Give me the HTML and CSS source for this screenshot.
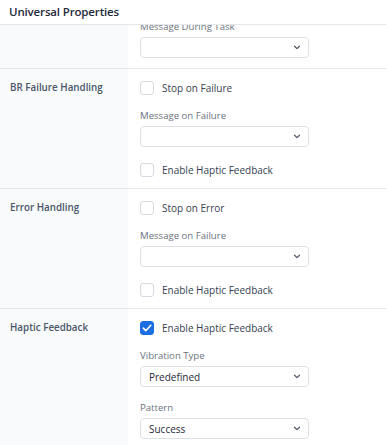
FILE: index.html
```html
<!DOCTYPE html>
<html lang="en">
<head>
    <meta charset="UTF-8">
    <meta name="viewport" content="width=device-width, initial-scale=1.0">
    <title>Universal Properties</title>
    <link rel="stylesheet" href="styles.css">
</head>
<body>
    <div class="panel">
        <div class="panel-header">Universal Properties</div>
        <div class="panel-body">
            <section class="row row-cut">
                <div class="row-label"></div>
                <div class="row-fields">
                    <div class="field-label first">Message During Task</div>
                    <div class="select"><span></span><svg width="8" height="5" viewBox="0 0 8 5"><path d="M1.5 1.2l2.5 2.4 2.5-2.4" /></svg></div>
                </div>
            </section>

            <section class="row">
                <div class="row-label">BR Failure Handling</div>
                <div class="row-fields">
                    <label class="check"><span class="box"></span>Stop on Failure</label>
                    <div class="field-label">Message on Failure</div>
                    <div class="select"><span></span><svg width="8" height="5" viewBox="0 0 8 5"><path d="M1.5 1.2l2.5 2.4 2.5-2.4" /></svg></div>
                    <label class="check after-select"><span class="box"></span>Enable Haptic Feedback</label>
                </div>
            </section>

            <section class="row">
                <div class="row-label">Error Handling</div>
                <div class="row-fields">
                    <label class="check"><span class="box"></span>Stop on Error</label>
                    <div class="field-label">Message on Failure</div>
                    <div class="select"><span></span><svg width="8" height="5" viewBox="0 0 8 5"><path d="M1.5 1.2l2.5 2.4 2.5-2.4" /></svg></div>
                    <label class="check after-select"><span class="box"></span>Enable Haptic Feedback</label>
                </div>
            </section>

            <section class="row">
                <div class="row-label">Haptic Feedback</div>
                <div class="row-fields">
                    <label class="check"><span class="box checked"><svg width="10" height="8" viewBox="0 0 10 8"><path d="M1.2 4.2l2.6 2.5L8.8 1.3" /></svg></span>Enable Haptic Feedback</label>
                    <div class="field-label">Vibration Type</div>
                    <div class="select"><span>Predefined</span><svg width="8" height="5" viewBox="0 0 8 5"><path d="M1.5 1.2l2.5 2.4 2.5-2.4" /></svg></div>
                    <div class="field-label">Pattern</div>
                    <div class="select"><span>Success</span><svg width="8" height="5" viewBox="0 0 8 5"><path d="M1.5 1.2l2.5 2.4 2.5-2.4" /></svg></div>
                </div>
            </section>
        </div>
    </div>
</body>
</html>
```

FILE: styles.css
```css
* {
    margin: 0;
    padding: 0;
    box-sizing: border-box;
    font-family: 'Open Sans', 'Noto Sans', sans-serif;
}

body {
    width: 386px;
    height: 445px;
    overflow: hidden;
    background: #fff;
}

.panel {
    height: 445px;
    display: flex;
    flex-direction: column;
}

.panel-header {
    height: 25px;
    padding-left: 9px;
    padding-bottom: 1px;
    display: flex;
    align-items: center;
    font-size: 11.5px;
    font-weight: 600;
    letter-spacing: -0.15px;
    color: #1e293b;
    border-bottom: 1px solid #e5e7eb;
    flex-shrink: 0;
}

.panel-body {
    flex: 1;
    overflow: hidden;
}

.row {
    display: grid;
    grid-template-columns: 128px 1fr;
    border-bottom: 1px solid #e5e7eb;
}

.row-cut {
    margin-top: -18px;
}

.row-cut .row-fields {
    padding-bottom: 10px;
}

.row-label {
    background: #f8fafc;
    padding: 12px 10px;
    font-size: 9.8px;
    font-weight: 600;
    line-height: 14px;
    color: #4a5668;
}

.row-fields {
    padding: 12px 12px 11px;
    display: flex;
    flex-direction: column;
}

.check {
    display: flex;
    align-items: center;
    gap: 8px;
    height: 14px;
    font-size: 10px;
    color: #374151;
}

.check.after-select {
    margin-top: 16px;
}

.box {
    width: 14px;
    height: 14px;
    border: 1px solid #d5d9e0;
    border-radius: 3px;
    background: #fff;
    display: flex;
    align-items: center;
    justify-content: center;
}

.box.checked {
    background: #1c6fe3;
    border-color: #1c6fe3;
}

.box svg path {
    fill: none;
    stroke: #fff;
    stroke-width: 1.6;
    stroke-linecap: round;
    stroke-linejoin: round;
}

.field-label {
    margin-top: 13px;
    margin-bottom: 2px;
    font-size: 9.6px;
    line-height: 16px;
    color: #6b7280;
}

.field-label.first {
    margin-top: 0;
}

.select {
    width: 169px;
    height: 21px;
    border: 1px solid #dde1e7;
    border-radius: 4px;
    background: #fff;
    display: flex;
    align-items: center;
    justify-content: space-between;
    padding: 0 7px 0 8px;
    font-size: 10px;
    color: #1f2937;
}

.select svg path {
    fill: none;
    stroke: #4b5563;
    stroke-width: 1.2;
    stroke-linecap: round;
    stroke-linejoin: round;
}
```
